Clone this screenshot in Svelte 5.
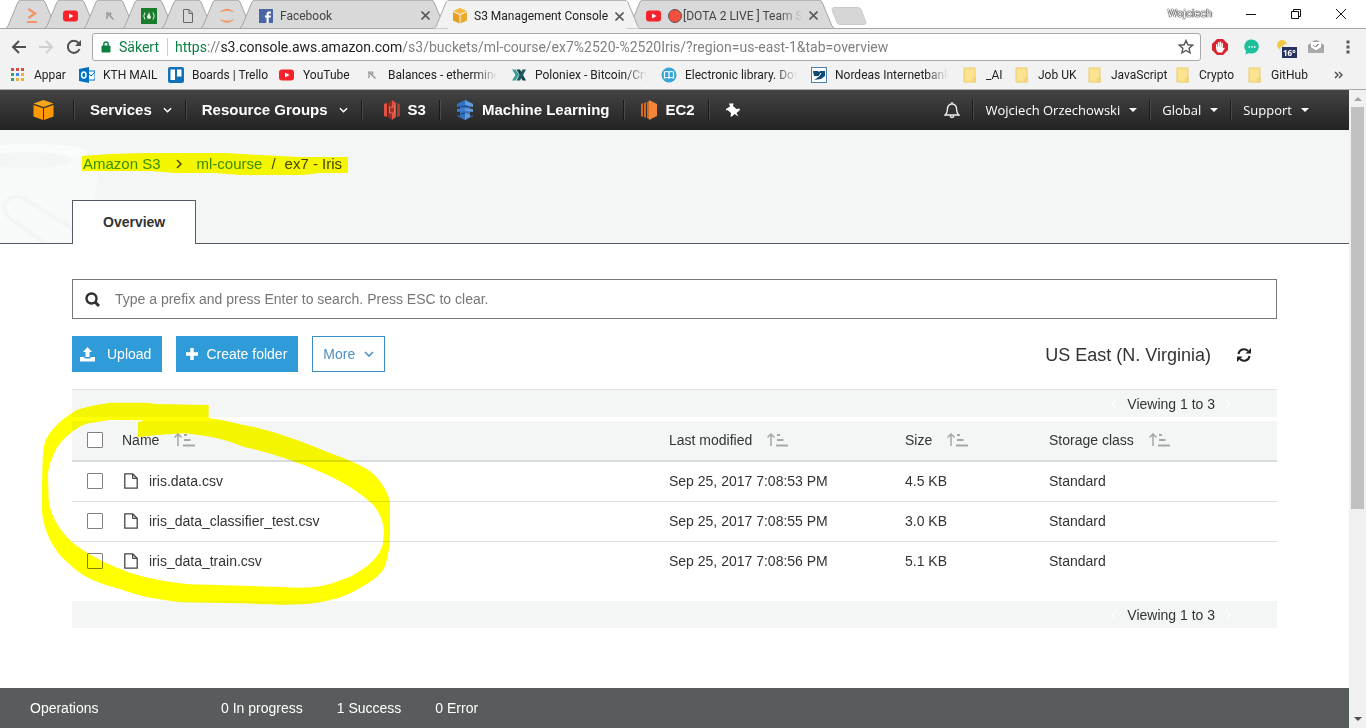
<script>
  const icons = {
    bitbucket: '<path d="M4.500 1l6.500 4.500-6.500 4.500" fill="none" stroke="#f39465" stroke-width="2.400"/><path d="M3 14h10" stroke="#f39465" stroke-width="2"/>',
    youtube: '<rect x="0" y="2.500" width="15" height="11" rx="3" fill="#f8222a"/><path d="M6 5.500l4.500 2.500L6 10.500z" fill="#fff"/>',
    miner: '<path d="M4 5h5M5 5v4M6 6l5.500 5.500M9 5L8 8M5.500 8.500l-1 2.500" fill="none" stroke="#8f8f8f" stroke-width="1.200"/>',
    fcc: '<rect width="16" height="16" fill="#1d7b2c"/><path d="M4 4.500q-2.500 3.500 0 7M12 4.500q2.500 3.500 0 7" fill="none" stroke="#e8f5e8"/><path d="M8 4c0 2-2 3-2 5q0 2 2 2t2-2c0-1-1-1-1-2t-1-3z" fill="#e8f5e8"/>',
    page: '<path d="M3.500 1.500h5.500l3.500 3.500v9.500h-9zM9 1.500v4h3.500" fill="none" stroke="#666"/>',
    jupyter: '<path d="M.5 4.500Q8-3 15.500 4.500 8 1 .5 4.500zM.5 11Q8 18.500 15.500 11 8 14.500.5 11z" fill="#ee9764"/>',
    facebook: '<rect x="1" y="1" width="14" height="14" fill="#4a66a5"/><path d="M8.500 15V9.500H7v-2h1.500V6Q8.500 3.500 11 3.500h2v2h-1.300q-1 0-1 1v1H13l-.3 2h-2V15z" fill="#fff"/>',
    cube: '<path d="M8 0l7 3-7 3-7-3z" fill="#f6b93b"/><path d="M1 4l6.500 3v8.500L1 12.500z" fill="#e2a024"/><path d="M15 4L8.500 7v8.500l6.500-3z" fill="#e9aa2d"/>',
    apps: '<g fill="#d94a3f"><path d="M1 1h3v3H1zM6 1h3v3H6zM11 1h3v3h-3z"/></g><g fill="#e8b33b"><path d="M6 11h3v3H6zM11 6h3v3h-3zM11 11h3v3h-3z"/></g><path d="M6 6h3v3H6z" fill="#4285f4"/><path d="M1 6h3v3H1zM1 11h3v3H1z" fill="#36a25c"/>',
    outlook: '<path d="M8 4h8v9H8z" fill="#fff" stroke="#0072c6"/><path d="M8 5l4 4 4-4" fill="none" stroke="#0072c6"/><path d="M0 2l10-2v16L0 14z" fill="#0072c6"/><ellipse cx="4.800" cy="8" rx="2.200" ry="3" fill="none" stroke="#fff" stroke-width="1.500"/>',
    trello: '<rect width="16" height="16" rx="2" fill="#1272b8"/><path d="M2.500 2.500h4.500v10.500H2.500zM9 2.500h4.500v7H9z" fill="#fff"/>',
    poloniex: '<path d="M1 2.500h3.500L8 8l-3.500 5.500H1L4.500 8z" fill="#3a9c96"/><path d="M5.500 2.500h3.500l6 11h-3.500z" fill="#13434b"/><path d="M11.500 2.500H15l-6 11H5.500z" fill="#1c5960"/>',
    library: '<circle cx="8" cy="8" r="7.500" fill="#35a5d6"/><path d="M3.500 5q2.500-1 4.500 0 2-1 4.500 0v6q-2.500-1-4.500 0-2-1-4.500 0zM8 5v6" fill="none" stroke="#fff" stroke-width="1.200"/>',
    nordea: '<rect x=".5" y=".5" width="15" height="15" fill="#fff" stroke="#4b83a8"/><path d="M2 4h5l1 1 1-1h5v5l-4 3-7 1q4-2 4-4H3z" fill="#0d4a75"/><path d="M4 11q5-1 6-5" stroke="#fff" fill="none"/>',
    folder: '<path d="M2 1h11v14H2z" fill="#fbe390" stroke="#eccb6a"/><path d="M11 15v-3.500h2.500V15z" fill="#fbe390" stroke="#eccb6a"/>'
  };

  const smallTabs = ['bitbucket', 'youtube', 'miner', 'fcc', 'page', 'jupyter'];
  const tabs = [
    { icon: 'facebook', title: 'Facebook' },
    { icon: 'cube', title: 'S3 Management Console', active: true },
    { icon: 'youtube', title: '[DOTA 2 LIVE ] Team Secret', live: true }
  ];
  const bookmarks = [
    ['apps', 'Appar'],
    ['outlook', 'KTH MAIL'],
    ['trello', 'Boards | Trello'],
    ['youtube', 'YouTube'],
    ['miner', 'Balances - ethermine.org', true],
    ['poloniex', 'Poloniex - Bitcoin/Crypto', true],
    ['library', 'Electronic library. Download', true],
    ['nordea', 'Nordeas Internetbanken', true],
    ['folder', '_AI'],
    ['folder', 'Job UK'],
    ['folder', 'JavaScript'],
    ['folder', 'Crypto'],
    ['folder', 'GitHub']
  ];
  const headings = ['Last modified', 'Size', 'Storage class'];
  const files = [
    { name: 'iris.data.csv', modified: 'Sep 25, 2017 7:08:53 PM', size: '4.5 KB' },
    { name: 'iris_data_classifier_test.csv', modified: 'Sep 25, 2017 7:08:55 PM', size: '3.0 KB' },
    { name: 'iris_data_train.csv', modified: 'Sep 25, 2017 7:08:56 PM', size: '5.1 KB' }
  ];
</script>

{#snippet icon(name)}
  <svg class="ico" viewBox="0 0 16 16" aria-hidden="true">{@html icons[name]}</svg>
{/snippet}

{#snippet edge(right)}
  <svg class="edge" class:right viewBox="0 0 14 28" aria-hidden="true">
    <path class="fill" d="M0 28L2 26 12 2 14 0V28z" />
    <path d="M0 28L2 26 12 2 14 0" fill="none" stroke="#a6a6a6" />
  </svg>
{/snippet}

{#snippet sort()}
  <svg class="sort" viewBox="0 0 21 14" aria-hidden="true">
    <path d="M4 13V1M.5 4.500L4 1l3.500 3.500" fill="none" stroke="#a3a8a8" stroke-width="1.500" />
    <path d="M10 2h3M10 7h6.500M9 12.500h12" stroke="#a3a8a8" stroke-width="2" />
  </svg>
{/snippet}

{#snippet chevron()}
  <svg class="chev" viewBox="0 0 10 6" aria-hidden="true"><path d="M1 1l4 4 4-4" fill="none" stroke="currentColor" stroke-width="1.600" /></svg>
{/snippet}

{#snippet pager()}
  <button class="page-arrow" aria-label="Previous page"><svg viewBox="0 0 6 10"><path d="M5 1L1 5l4 4" /></svg></button>
  <span>Viewing 1 to 3</span>
  <button class="page-arrow" aria-label="Next page"><svg viewBox="0 0 6 10"><path d="M1 1l4 4-4 4" /></svg></button>
{/snippet}

<div class="window">
  <header class="chrome">
    <div class="tabstrip">
      {#each smallTabs as name}
        <div class="tab small">
          {@render edge(false)}
          <div class="tab-body">{@render icon(name)}</div>
          {@render edge(true)}
        </div>
      {/each}
      {#each tabs as t}
        <div class="tab" class:active={t.active}>
          {@render edge(false)}
          <div class="tab-body">
            {@render icon(t.icon)}
            {#if t.live}<i class="dot"></i>{/if}
            <span class="tab-title" class:fade={t.live}>{t.title}</span>
            <button class="close" aria-label="Close tab"><svg viewBox="0 0 9 9"><path d="M.5.5l8 8M8.500.5l-8 8" stroke="#5a5a5a" stroke-width="1.600" /></svg></button>
          </div>
          {@render edge(true)}
        </div>
      {/each}
      <svg class="newtab" viewBox="0 0 36 18" aria-hidden="true"><path d="M3 .5h24q2 0 3 2l5 13q0 2-2 2H9q-2 0-3-2L1 3q0-2.500 2-2.500z" fill="#d6d6d6" stroke="#cacaca" /></svg>
      <div class="wincontrols">
        <span class="profile">Wojciech</span>
        <button aria-label="Minimize"><svg viewBox="0 0 12 12"><path d="M1 6.500h10" /></svg></button>
        <button aria-label="Restore"><svg viewBox="0 0 12 12"><path d="M1.500 3.500h7v7h-7zM3.500 3.500v-2h7v7h-2" /></svg></button>
        <button aria-label="Close window"><svg viewBox="0 0 12 12"><path d="M1 1l10 10M11 1L1 11" /></svg></button>
      </div>
    </div>

    <div class="toolbar">
      <button aria-label="Back"><svg viewBox="0 0 16 16"><path d="M15 8H2M8 2L2 8l6 6" fill="none" stroke="#505050" stroke-width="2" /></svg></button>
      <button aria-label="Forward"><svg viewBox="0 0 16 16"><path d="M1 8h13M8 2l6 6-6 6" fill="none" stroke="#d0d0d0" stroke-width="2" /></svg></button>
      <button aria-label="Reload"><svg viewBox="0 0 16 16"><path d="M14.500 10A6 6 0 1 1 13.500 4" fill="none" stroke="#505050" stroke-width="2" /><path d="M16 1v6h-6z" fill="#505050" /></svg></button>
      <div class="omnibox">
        <svg class="lock" viewBox="0 0 10 12" aria-hidden="true"><path d="M1 5h8v6H1z" fill="#0b8043" stroke="#0b8043" /><path d="M2.800 5V3.200a2.200 2.200 0 0 1 4.400 0V5" fill="none" stroke="#0b8043" stroke-width="1.400" /></svg>
        <span class="secure">Säkert</span>
        <span class="url"><span class="scheme">https</span>://<b>s3.console.aws.amazon.com</b>/s3/buckets/ml-course/ex7%2520-%2520Iris/?region=us-east-1&amp;tab=overview</span>
        <svg class="star" viewBox="0 0 16 16" aria-hidden="true"><path d="M8 1.500l1.900 4.300 4.700.4-3.500 3.100 1 4.600L8 11.500l-4.100 2.400 1-4.600L1.400 6.200l4.700-.4z" fill="none" stroke="#555" stroke-width="1.400" /></svg>
      </div>
      <div class="extensions">
        <svg viewBox="0 0 16 16" aria-hidden="true"><path d="M5 0h6l5 5v6l-5 5H5l-5-5V5z" fill="#d9232e" /><path d="M4 8V5.500q.8-.8 1.300 0V8h.5V3.500q.7-.8 1.400 0V7.500h.4V2.800q.8-.8 1.500 0v4.700h.4V4q.8-.7 1.400 0v5.500l1.200-1q1 .2.400 1.200L10 13.500H6.500Q4 12 4 9z" fill="#fff" /></svg>
        <svg viewBox="0 0 16 16" aria-hidden="true"><path d="M8 .5a7 7 0 1 1-3 13.400L1.500 15.500 2 12A7 7 0 0 1 8 .5z" fill="#1fbf9c" /><path d="M4.500 8H6M7.300 8h1.500M10 8h1.500" stroke="#fff" stroke-width="1.400" /></svg>
        <span class="weather"><svg viewBox="0 0 16 16" aria-hidden="true"><circle cx="6" cy="6" r="5" fill="#f6c945" /><path d="M4 12q-1-4 3-4 1-4 5-2 3 2 2 6z" fill="#f0f2f4" stroke="#e3e6e9" /></svg><em>16°</em></span>
        <svg viewBox="0 0 16 16" aria-hidden="true"><path d="M0 6l3-2q5-6 10 0l3 2v8H0z" fill="#aaa" /><path d="M3 3h10v6l-5 3-5-3z" fill="#fff" /><path d="M5 6l2 2 3-3M8 8l3-3M0 7l8 5 8-5" fill="none" stroke="#999" /></svg>
        <svg class="menu" viewBox="0 0 16 16" aria-hidden="true"><path d="M6.500 1.500h3v3h-3zM6.500 6.500h3v3h-3zM6.500 11.500h3v3h-3z" fill="#5a5a5a" /></svg>
      </div>
    </div>

    <nav class="bookmarks" aria-label="Bookmarks">
      {#each bookmarks as [name, label, long]}
        <a href="#bookmark" class:long>{@render icon(name)}<span class:fade={long}>{label}</span></a>
      {/each}
      <svg class="more-marks" viewBox="0 0 9 8" aria-hidden="true"><path d="M1 1l3 3-3 3M5 1l3 3-3 3" fill="none" stroke="#555" stroke-width="1.500" /></svg>
    </nav>
  </header>

  <div class="viewport">
    <div class="console">
      <nav class="aws">
        <a class="home" href="#home" aria-label="AWS home"><svg viewBox="0 0 20 20"><path d="M10 0l10 3.500-10 3.500L0 3.500z" fill="#f7a51c" /><path d="M0 5l9.500 3.200V20L0 16.500z" fill="#f90" /><path d="M20 5l-9.500 3.200V20l9.500-3.500z" fill="#f90" /></svg></a>
        <button class="main services">Services {@render chevron()}</button>
        <button class="main groups">Resource Groups {@render chevron()}</button>
        <a class="main s3" href="#s3"><svg viewBox="0 0 18 20"><path d="M1 4l3-1v14l-3-1z" fill="#e05243" /><path d="M5 3l4-3v20l-4-3z" fill="#8c3123" /><path d="M9 0l4 3v14l-4 3z" fill="#e05243" /><path d="M14 3l3 1v12l-3 1z" fill="#b0392b" /><path d="M6.500 7h5v6h-5z" fill="#a83226" stroke="#ef7b6b" stroke-width=".8" /></svg>S3</a>
        <a class="main ml" href="#ml"><svg viewBox="0 0 18 20"><path d="M9 0l8 4v3l-3-1v10l3-1v1l-8 4-8-4v-1l3 1V6L1 7V4z" fill="#3570bd" /><path d="M9 0l8 4v3L9 5zM9 8l8 1v3l-8-1zM9 13l5 1v3l-5 3z" fill="#6199de" /><path d="M1 9l8-1v3l-8 1z" fill="#3f7ccc" /><path d="M5 7l4-1 4 1M5 14l4-1" fill="none" stroke="#183f73" /></svg>Machine Learning</a>
        <a class="main ec2" href="#ec2"><svg viewBox="0 0 18 20"><path d="M1 4l2-1v14l-2-1zM4 3l2-1v16l-2-1zM7 2l2-1v18l-2-1z" fill="#d36b1f" /><path d="M9 0l8 4v12l-8 4z" fill="#f58536" /></svg>EC2</a>
        <button class="pin" aria-label="Edit shortcuts"><svg viewBox="0 0 14 14"><path d="M3 .5L7.500.5 7 3l3.500 3 3-.5.5 1.500-3.500 3 2 3.500L8.500 11 6 13.500H4.500L5 10 1.500 7 0 7.500V6l4-2.500z" fill="#fff" /></svg></button>
        <div class="right">
          <button class="bell" aria-label="Notifications"><svg viewBox="0 0 16 17"><path d="M1 13q2.500-2 2.500-7Q4.500 2 8 2t4.500 4q0 5 2.500 7zM8 0v2M6 14q2 3 4 0" fill="none" stroke="#eee" stroke-width="1.400" /></svg></button>
          <button>Wojciech Orzechowski <i class="caret"></i></button>
          <button>Global <i class="caret"></i></button>
          <button>Support <i class="caret"></i></button>
        </div>
      </nav>

      <section class="hero">
        <svg class="desk" viewBox="0 0 110 113" aria-hidden="true">
          <path d="M0 22q90-8 98 18l-8 73H0z" fill="#f8f9f9" />
          <ellipse cx="30" cy="22" rx="58" ry="8" fill="#fafbfb" />
          <ellipse cx="28" cy="30" rx="44" ry="8" fill="#f4f6f6" />
          <path d="M74 100L24 68Q10 62 4 76q0 8 8 14l34 24" fill="none" stroke="#f3f4f4" stroke-width="4" />
        </svg>
        <div class="crumbs">
          <a href="#buckets">Amazon S3</a>
          <svg class="sep" viewBox="0 0 6 10" aria-hidden="true"><path d="M1 1l4 4-4 4" fill="none" stroke="#444" stroke-width="1.500" /></svg>
          <a href="#bucket">ml-course</a><span class="slash">/</span><span>ex7 - Iris</span>
          <svg class="marker" viewBox="0 0 266 22" aria-hidden="true"><path d="M0 3L28 1 63 0h80l35 2 40 2h48v16h-28l-17 2h-63l-25-2H94l-26-2H0z" fill="#ff0" /></svg>
        </div>
        <button class="overview">Overview</button>
      </section>

      <main>
        <label class="search">
          <svg viewBox="0 0 15 15" aria-hidden="true"><circle cx="6.500" cy="6.500" r="5" fill="none" stroke="#2f2f2f" stroke-width="2.400" /><path d="M10 10L14 14" stroke="#2f2f2f" stroke-width="3" /></svg>
          <input type="text" aria-label="Search by prefix" placeholder="Type a prefix and press Enter to search. Press ESC to clear." />
        </label>

        <div class="actions">
          <button class="btn upload"><svg viewBox="0 0 15 15" aria-hidden="true"><path d="M7.500 0L12 5H9.500v5h-4V5H3zM0 10h4.500v1.500h6V10H15v4.500H0z" fill="#fff" /></svg>Upload</button>
          <button class="btn"><svg class="plus" viewBox="0 0 12 12" aria-hidden="true"><path d="M6 0v12M0 6h12" stroke="#fff" stroke-width="3.400" /></svg>Create folder</button>
          <button class="btn outline">More {@render chevron()}</button>
          <span class="region">US East (N. Virginia)</span>
          <button class="refresh" aria-label="Refresh"><svg viewBox="0 0 14 14"><path d="M1.500 6A5.500 5.500 0 0 1 11 3M12.500 8A5.500 5.500 0 0 1 3 11" fill="none" stroke="#222" stroke-width="2" /><path d="M14 0v5.500H8.500zM0 14V8.500h5.500z" fill="#222" /></svg></button>
        </div>

        <div class="listing">
          <div class="bar top">{@render pager()}</div>
          <table>
            <colgroup><col class="c-check" /><col /><col class="c-mod" /><col class="c-size" /><col class="c-class" /></colgroup>
            <thead>
              <tr>
                <th><input type="checkbox" aria-label="Select all" /></th>
                <th>Name {@render sort()}</th>
                {#each headings as h}<th>{h} {@render sort()}</th>{/each}
              </tr>
            </thead>
            <tbody>
              {#each files as f}
                <tr>
                  <td><input type="checkbox" aria-label={'Select ' + f.name} /></td>
                  <td>
                    <svg class="file" viewBox="0 0 14 16" aria-hidden="true"><path d="M.8.8h8l4.400 4.400v10H.8z" fill="none" stroke="#444" stroke-width="1.300" /><path d="M8.500 1v4.500H13z" fill="#bbb" stroke="#444" /></svg>{f.name}
                  </td>
                  <td>{f.modified}</td>
                  <td>{f.size}</td>
                  <td>Standard</td>
                </tr>
              {/each}
            </tbody>
          </table>
          <div class="bar bottom">{@render pager()}</div>
          <svg class="circle" viewBox="0 0 1140 690" aria-hidden="true">
            <path
              fill="#ff0"
              fill-rule="evenodd"
              d="M536 60L380 57 345 53H240C200 58 165 66 140 75C90 105 60 135 45 170C36 200 38 260 36 300V375C38 420 55 460 75 490C90 515 110 530 130 548C160 575 210 597 270 612C330 635 390 645 460 652L640 655C720 660 760 660 830 657C880 652 930 640 960 625C1000 605 1045 580 1062 550C1075 520 1080 480 1080 440V350C1070 310 1040 270 1010 252C970 228 900 205 840 180C760 150 700 130 630 118C590 108 560 102 536 100ZM324 157L380 150 460 145C540 152 590 165 640 185C730 205 800 230 870 260C930 285 990 320 1030 360C1050 385 1060 410 1062 440L1058 480C1045 520 1010 550 960 575C900 600 860 608 810 608L640 602 480 598C420 592 330 578 280 555C220 535 170 505 130 475C90 440 60 390 56 345L54 270C56 240 65 220 80 190C100 160 130 130 175 115L240 105 345 106 324 112Z"
            />
          </svg>
        </div>
      </main>

      <footer>
        <span class="ops">Operations</span><span>0 In progress</span><span>1 Success</span><span>0 Error</span>
      </footer>
    </div>

    <div class="scrollbar" aria-hidden="true">
      <i class="up"></i>
      <div class="thumb"></div>
      <i class="down"></i>
    </div>
  </div>
</div>

<style>
  :global(body) { margin: 0; }
  * { box-sizing: border-box; }
  button { font: inherit; color: inherit; background: none; border: 0; padding: 0; margin: 0; display: flex; align-items: center; }
  a { text-decoration: none; color: inherit; }
  svg { display: block; flex: none; }
  .window { min-height: 100vh; display: flex; flex-direction: column; font: 14px/20px "Liberation Sans", Arial, sans-serif; color: #333; background: #fff; }

  .chrome { font: 12px/16px Roboto, "Open Sans", sans-serif; color: #222; background: #f2f2f2; border-bottom: 1px solid #aaa; height: 90px; }
  .tabstrip { display: flex; height: 29px; background: #fff; border-bottom: 1px solid #a6a6a6; padding-left: 6px; isolation: isolate; }
  .tab { flex: 0 1 206px; min-width: 0; display: flex; margin-right: -12px; height: 28px; position: relative; }
  .tab.small { flex: 0 0 51px; }
  .tab.active { z-index: 2; height: 29px; }
  .edge { width: 14px; height: 28px; }
  .edge.right { transform: scaleX(-1); }
  .edge .fill { fill: #d9d9d9; }
  .active .edge { height: 29px; }
  .active .edge .fill { fill: #f2f2f2; }
  .tab-body { flex: 1; min-width: 0; display: flex; align-items: center; gap: 6px; background: #d9d9d9; border-top: 1px solid #b8b8b8; padding: 2px 0 0 4px; color: #444; }
  .active .tab-body { background: #f2f2f2; color: #222; }
  .ico { width: 16px; height: 16px; }
  .tab-title { flex: 1; min-width: 0; overflow: hidden; white-space: nowrap; }
  .fade { -webkit-mask-image: linear-gradient(to right, #000 80%, transparent); mask-image: linear-gradient(to right, #000 80%, transparent); }
  .dot { width: 14px; height: 14px; border-radius: 50%; background: #f0503c; border: 1px solid #555; margin-right: -5px; flex: none; }
  .close { margin-right: 2px; }
  .close svg { width: 9px; height: 9px; }
  .newtab { width: 36px; height: 18px; margin: 7px 0 0 9px; }
  .wincontrols { margin-left: auto; display: flex; align-items: center; padding-right: 19px; }
  .wincontrols button { margin-left: 33px; }
  .wincontrols svg { width: 12px; height: 12px; fill: none; stroke: #111; }
  .profile { font-size: 11px; color: #fff; text-shadow: 0 0 1px #000, 0 0 1px #000, 0 0 1px #000; }

  .toolbar { display: flex; align-items: center; height: 36px; padding: 0 10px 0 11px; gap: 11px; }
  .toolbar button svg { width: 16px; height: 16px; }
  .omnibox { flex: 1; min-width: 0; display: flex; align-items: center; height: 28px; background: #fff; border: 1px solid #a9a9a9; border-radius: 3px; padding: 0 6px 0 8px; font-size: 14px; line-height: 18px; color: #808080; white-space: nowrap; }
  .lock { width: 10px; height: 12px; margin-right: 8px; }
  .secure { color: #0b8043; padding-right: 8px; border-right: 1px solid #ccc; margin-right: 7px; }
  .url { flex: 1; min-width: 0; }
  .url b { color: #222; font-weight: 400; }
  .url .scheme { color: #0b8043; }
  .star { width: 16px; height: 16px; }
  .extensions { display: flex; align-items: center; gap: 16px; }
  .extensions svg { width: 16px; height: 16px; }
  .weather { position: relative; }
  .weather em { position: absolute; left: 6px; top: 8px; background: #24345c; color: #fff; font: 700 8px/11px "Open Sans", sans-serif; padding: 0 1px; }

  .bookmarks { display: grid; grid-template-columns: 69px 89px 111px 85px 147px 150px 150px 151px 52px 73px 88px 72px 1fr auto; align-items: center; height: 20px; padding: 0 23px 0 10px; }
  .bookmarks a { display: flex; align-items: center; gap: 8px; min-width: 0; white-space: nowrap; }
  .bookmarks a.long { padding-right: 14px; }
  .bookmarks .fade { overflow: hidden; min-width: 0; }
  .more-marks { width: 9px; height: 8px; }

  .viewport { flex: 1; display: flex; }
  .console { flex: 1; min-width: 0; display: flex; flex-direction: column; }
  .aws { display: flex; height: 40px; background: linear-gradient(#444, #222); color: #fff; padding: 10px 28px 10px 33px; font-size: 15px; font-weight: 700; }
  .aws > a, .aws > button, .right > button { display: flex; align-items: center; height: 20px; border-right: 1px solid #191919; box-shadow: 1px 0 #4a4a4a; white-space: nowrap; }
  .aws .home { padding-right: 19px; }
  .home svg { width: 21px; height: 20px; }
  .aws .main { padding: 0 13px 0 16px; }
  .aws .s3 { padding-left: 21px; }
  .aws .s3 { gap: 7px; }
  .aws .ml, .aws .ec2 { gap: 8px; }
  .main > svg:first-child:not(.chev) { width: 18px; height: 20px; }
  .chev { width: 10px; height: 6px; }
  .main .chev { width: 9px; margin-left: 11px; }
  .aws .pin { padding-left: 17px; border: 0; box-shadow: none; }
  .pin svg { width: 14px; height: 14px; }
  .right { margin-left: auto; display: flex; font: 13px/20px "Open Sans", "Noto Sans", sans-serif; }
  .aws .right > button { padding: 0 12px; gap: 9px; }
  .aws .right > button:last-child { border: 0; box-shadow: none; }
  .bell svg { width: 16px; height: 17px; }
  .caret { border: 4px solid transparent; border-top-color: #fff; border-bottom: 0; }

  .hero { position: relative; height: 114px; background: #f4f6f6; border-bottom: 1px solid #545b64; padding: 24px 72px 0; }
  .desk { position: absolute; left: 0; top: 0; width: 110px; height: 113px; }
  .crumbs { position: relative; display: flex; align-items: center; width: max-content; padding-left: 11px; font-size: 15px; height: 20px; color: #444; }
  .crumbs a { color: #3b8ebd; }
  .sep { width: 6px; height: 10px; margin: 0 15px; }
  .slash { margin: 0 9px; }
  .marker { position: absolute; left: 10px; top: -1px; width: 266px; height: 22px; mix-blend-mode: multiply; }
  .overview { position: relative; height: 44px; margin-top: 26px; padding: 0 30px 2px; background: #fff; border: 1px solid #545b64; border-bottom: 0; font-weight: 700; }

  main { flex: 1; padding: 35px 72px 60px; }
  .search { display: flex; align-items: center; height: 40px; border: 1px solid #777; padding: 0 12px; gap: 15px; }
  .search svg { width: 15px; height: 15px; }
  .search input { flex: 1; min-width: 0; border: 0; outline: 0; padding: 0; font: inherit; background: none; }
  .search input::placeholder { color: #777; opacity: 1; }
  .actions { display: flex; align-items: center; margin: 17px 0; height: 36px; }
  .btn { height: 36px; background: #309bd9; color: #fff; padding: 0 11px 0 10px; margin-right: 14px; }
  .btn svg { width: 15px; height: 15px; margin-right: 12px; }
  .btn.upload { padding-left: 8px; }
  .btn .plus { width: 12px; height: 12px; margin-right: 8px; }
  .btn.outline { background: #fff; border: 1px solid #3c8dc4; color: #4f90c4; padding-right: 10px; }
  .btn .chev { width: 10px; height: 6px; margin: 0 0 0 9px; }
  .region { margin-left: auto; padding-top: 2px; font-size: 18px; line-height: 24px; }
  .refresh { margin: 2px 26px 0; }
  .refresh svg { width: 14px; height: 14px; }

  .listing { position: relative; }
  .bar { display: flex; justify-content: flex-end; align-items: center; gap: 10px; height: 28px; background: #f4f6f6; padding-right: 46px; }
  .bar.top { border-top: 1px solid #e0e3e3; margin-bottom: 4px; }
  .bar.bottom { margin-top: 19px; height: 27px; }
  .page-arrow svg { width: 6px; height: 10px; fill: none; stroke: #fcfdfd; stroke-width: 1.500; }
  table { width: 100%; table-layout: fixed; border-collapse: separate; border-spacing: 0; }
  .c-check { width: 50px; }
  .c-mod { width: 236px; }
  .c-size { width: 144px; }
  .c-class { width: 228px; }
  th, td { height: 40px; padding: 0 0 2px; text-align: left; font-weight: 400; vertical-align: middle; border-bottom: 1px solid #dcdfdf; }
  th { height: 41px; background: #f4f6f6; border-bottom: 2px solid #d8dcdc; }
  tbody tr:last-child td { border-bottom-color: transparent; }
  th:first-child, td:first-child { padding-left: 15px; }
  input[type='checkbox'] { appearance: none; display: block; width: 16px; height: 16px; margin: 0; border: 1px solid #808080; border-radius: 1px; background: #fff; }
  .sort { display: inline-block; width: 21px; height: 14px; margin-left: 11px; vertical-align: -2px; }
  .file { display: inline-block; width: 14px; height: 16px; margin: 0 11px 0 2px; vertical-align: -3px; }
  .circle { position: absolute; left: -42px; top: -4px; width: 380px; height: 230px; mix-blend-mode: multiply; pointer-events: none; }

  footer { display: flex; align-items: center; height: 40px; background: #585c5c; color: #fff; padding: 0 30px; gap: 34px; }
  .ops { width: 157px; }

  .scrollbar { width: 17px; background: #f1f1f1; display: flex; flex-direction: column; align-items: center; padding: 7px 0; }
  .thumb { width: 13px; height: 402px; background: #c1c1c1; margin-top: 6px; }
  .up { border: 4px solid transparent; border-bottom-color: #a3a3a3; border-top: 0; }
  .down { border: 4px solid transparent; border-top-color: #505050; border-bottom: 0; margin-top: auto; }
</style>
